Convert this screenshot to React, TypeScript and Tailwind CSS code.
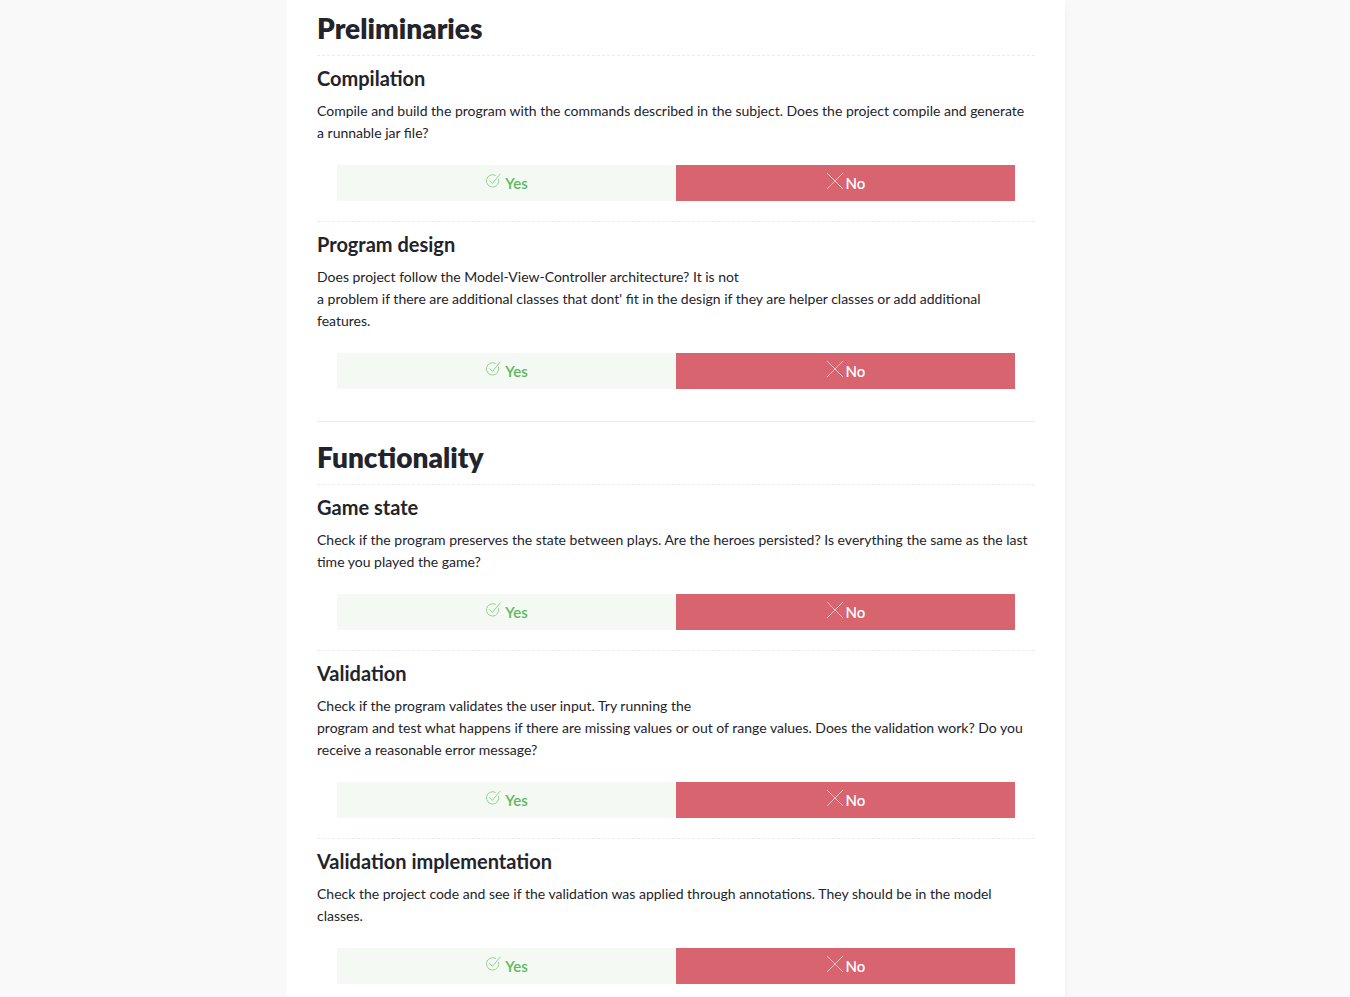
import React from "react";

type Question = {
  title: string;
  lines: string[];
};

type Section = {
  title: string;
  questions: Question[];
};

const sections: Section[] = [
  {
    title: "Preliminaries",
    questions: [
      {
        title: "Compilation",
        lines: [
          "Compile and build the program with the commands described in the subject. Does the project compile and generate a runnable jar file?",
        ],
      },
      {
        title: "Program design",
        lines: [
          "Does project follow the Model-View-Controller architecture? It is not",
          "a problem if there are additional classes that dont' fit in the design if they are helper classes or add additional features.",
        ],
      },
    ],
  },
  {
    title: "Functionality",
    questions: [
      {
        title: "Game state",
        lines: [
          "Check if the program preserves the state between plays. Are the heroes persisted? Is everything the same as the last time you played the game?",
        ],
      },
      {
        title: "Validation",
        lines: [
          "Check if the program validates the user input. Try running the",
          "program and test what happens if there are missing values or out of range values. Does the validation work? Do you receive a reasonable error message?",
        ],
      },
      {
        title: "Validation implementation",
        lines: [
          "Check the project code and see if the validation was applied through annotations. They should be in the model classes.",
        ],
      },
    ],
  },
];

function CheckIcon() {
  return (
    <svg width="16" height="16" viewBox="0 0 16 16" fill="none" className="mb-[5px]">
      <path
        d="M13.6 6.2A6.2 6.2 0 1 1 10.4 2.3"
        stroke="#94d394"
        strokeWidth="1"
        strokeLinecap="round"
      />
      <path d="M4.8 7.6l2.6 2.8L15.2 1" stroke="#94d394" strokeWidth="1" strokeLinecap="round" />
    </svg>
  );
}

function CrossIcon() {
  return (
    <svg width="18" height="18" viewBox="0 0 18 18" fill="none" className="mb-[5px]">
      <path d="M1 1l16 16M17 1L1 17" stroke="#f1c3c7" strokeWidth="1" />
    </svg>
  );
}

function Answer() {
  return (
    <div className="mx-5 flex h-9">
      <button className="flex flex-1 items-center justify-center gap-[4px] bg-[#f4f9f4] text-[15px] font-semibold text-[#5cb85c]">
        <CheckIcon />
        Yes
      </button>
      <button className="flex flex-1 items-center justify-center gap-[2px] bg-[#d7646e] text-[15px] font-semibold text-white">
        <CrossIcon />
        No
      </button>
    </div>
  );
}

function QuestionBlock({ title, lines }: Question) {
  return (
    <div className="border-t border-dashed border-[#ececec] pt-[10px] pb-[20px]">
      <h3 className="text-[20px] font-bold leading-[24px] text-[#23232b]">{title}</h3>
      <p className="mt-[10px] max-w-[712px] text-[14px] leading-[22px] text-[#23232b]">
        {lines.map((line, i) => (
          <React.Fragment key={i}>
            {i > 0 && <br />}
            {line}
          </React.Fragment>
        ))}
      </p>
      <div className="mt-[21px]">
        <Answer />
      </div>
    </div>
  );
}

export default function App() {
  return (
    <div className="min-h-screen bg-[#f9f9f9] font-['Lato',sans-serif]">
      <div className="ml-[287px] w-[778px] bg-white px-[30px] pt-[11px] pb-8 shadow-[8px_0_8px_-6px_rgba(0,0,0,0.03)]">
        {sections.map((section, i) => (
          <section
            key={section.title}
            className={i > 0 ? "mt-[12px] border-t border-[#ececec] pt-[18px]" : ""}
          >
            <h2 className="pb-[10px] text-[28px] font-extrabold leading-[34px] text-[#23232b]">
              {section.title}
            </h2>
            {section.questions.map((q) => (
              <QuestionBlock key={q.title} {...q} />
            ))}
          </section>
        ))}
      </div>
    </div>
  );
}
